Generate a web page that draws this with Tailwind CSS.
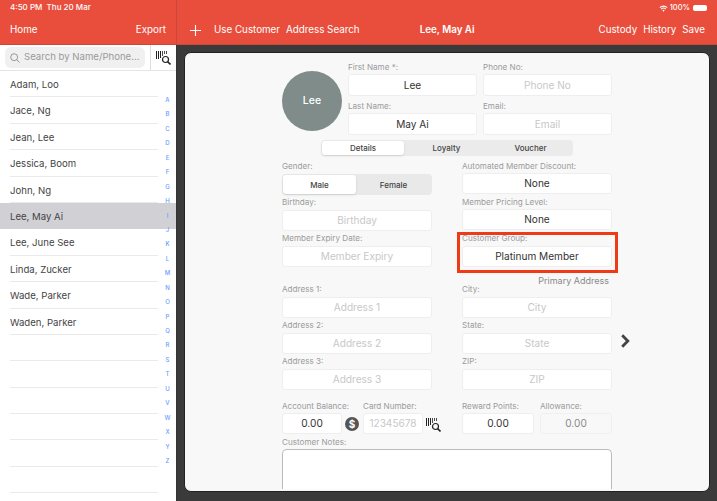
<!DOCTYPE html>
<html lang="en">
<head>
<meta charset="UTF-8">
<title>Customer</title>
<script src="https://cdn.jsdelivr.net/npm/@tailwindcss/browser@4"></script>
</head>
<body class="w-[717px] h-[501px] overflow-hidden bg-[#3a3a3a] font-['Inter','Liberation_Sans',sans-serif] text-[#333]">
<!-- Header -->
<div class="flex h-[45px] bg-[#e94e3d] text-white text-[9.8px] border-b border-[#c9483a]">
  <div class="w-[177px] shrink-0 border-r border-[#c9483a] px-[10px]">
    <div class="h-[14px] pt-[2px] text-[8px] font-medium leading-[10px]">4:50 PM&nbsp; Thu 20 Mar</div>
    <div class="flex justify-between pt-[9px] pr-[0px] leading-[14px]"><span>Home</span><span>Export</span></div>
  </div>
  <div class="flex-1">
    <div class="flex justify-end items-center h-[14px] pt-[2px] pr-[10px] text-[7.5px] font-medium leading-[10px]">
      <svg class="mr-[2px]" width="9" height="7" viewBox="0 0 10 8" fill="none" stroke="white" stroke-width="1.2"><path d="M.8 3a6 6 0 0 1 8.4 0M2.3 4.6a4 4 0 0 1 5.4 0"/><path d="M5 7.6 3.7 6.1a2 2 0 0 1 2.6 0z" fill="white" stroke="none"/></svg>
      <span>100%</span>
      <span class="ml-[3px] w-[14px] h-[6px] bg-white rounded-[2px]"></span>
    </div>
    <div class="flex items-center pt-[9px] leading-[14px]">
      <svg class="ml-[13px]" width="11" height="11" viewBox="0 0 11 11" stroke="white" stroke-width="1.1"><path d="M5.5 0v11M0 5.5h11"/></svg>
      <span class="ml-[13px]">Use Customer</span>
      <span class="ml-[6px]">Address Search</span>
      <span class="ml-[60px] font-semibold">Lee, May Ai</span>
      <span class="ml-auto">Custody</span>
      <span class="ml-[6px]">History</span>
      <span class="ml-[6px] mr-[12px]">Save</span>
    </div>
  </div>
</div>
<div class="flex h-[456px]">
  <!-- Sidebar -->
  <div class="w-[177px] shrink-0 bg-white border-r border-[#333] relative overflow-hidden">
    <div class="flex h-[26px] border-b border-[#e4e4e4]">
      <div class="ml-[5px] mt-[2px] w-[140px] h-[21px] bg-[#f0f0f0] rounded-[6px] flex items-center pl-[5px] gap-[4px] text-[9.6px] whitespace-nowrap text-[#9a9a9a]">
        <svg width="10" height="10" viewBox="0 0 11 11" fill="none" stroke="#8e8e8e" stroke-width="1"><circle cx="4.6" cy="4.6" r="3.8"/><path d="m7.5 7.5 3 3"/></svg>
        <span>Search by Name/Phone...</span>
      </div>
      <div class="ml-[5px] w-[26px] border-l border-[#ddd] flex items-center justify-center">
        <svg width="15" height="14" viewBox="0 0 15 14"><path d="M0 0h1v8H0zM2 0h1v8H2zM4 0h1v7H4zM6 0h.8v5H6zM8 0h.8v3H8zM10 0h.8v3h-.8z" fill="#222"/><circle cx="9.5" cy="8.5" r="3" fill="white" stroke="#222" stroke-width="1.2"/><path d="m11.7 10.7 2.8 2.8" stroke="#222" stroke-width="1.6"/></svg>
      </div>
    </div>
    <div class="pl-[10px] pr-[18px] text-[9.6px] text-[#444]">
      <div class="h-[26.4px] leading-[27px] border-b border-[#eaeaea]">Adam, Loo</div>
      <div class="h-[26.4px] leading-[27px] border-b border-[#eaeaea]">Jace, Ng</div>
      <div class="h-[26.4px] leading-[27px] border-b border-[#eaeaea]">Jean, Lee</div>
      <div class="h-[26.4px] leading-[27px] border-b border-[#eaeaea]">Jessica, Boom</div>
      <div class="h-[26.4px] leading-[27px] border-b border-[#eaeaea]">John, Ng</div>
      <div class="h-[26.4px] leading-[27px] -ml-[10px] -mr-[18px] pl-[10px] bg-[#d1d0d5]">Lee, May Ai</div>
      <div class="h-[26.4px] leading-[27px] border-b border-[#eaeaea]">Lee, June See</div>
      <div class="h-[26.4px] leading-[27px] border-b border-[#eaeaea]">Linda, Zucker</div>
      <div class="h-[26.4px] leading-[27px] border-b border-[#eaeaea]">Wade, Parker</div>
      <div class="h-[26.4px] leading-[27px] border-b border-[#eaeaea]">Waden, Parker</div>
      <div class="h-[26.4px] border-b border-[#eaeaea]"></div>
      <div class="h-[26.4px] border-b border-[#eaeaea]"></div>
      <div class="h-[26.4px] border-b border-[#eaeaea]"></div>
      <div class="h-[26.4px] border-b border-[#eaeaea]"></div>
      <div class="h-[26.4px] border-b border-[#eaeaea]"></div>
      <div class="h-[26.4px] border-b border-[#eaeaea]"></div>
    </div>
    <!-- A-Z index sits over the list -->
    <div class="absolute left-[160px] top-[48px] w-[15px] text-center text-[6px] font-medium leading-[14.44px] text-[#6a9cff]">
      <div>A</div><div>B</div><div>C</div><div>D</div><div>E</div><div>F</div><div>G</div><div>H</div><div>I</div><div>J</div><div>K</div><div>L</div><div>M</div><div>N</div><div>O</div><div>P</div><div>Q</div><div>R</div><div>S</div><div>T</div><div>U</div><div>V</div><div>W</div><div>X</div><div>Y</div><div>Z</div>
    </div>
  </div>
  <!-- Content -->
  <div class="flex-1 pt-[7px] pl-[7px]">
    <div class="w-[526px] h-[440px] bg-[#f8f8f8] border border-[#222] rounded-[7px] overflow-hidden pt-[9px] pl-[97px] text-[8.1px] text-[#9b9b9b]">
      <div class="flex">
        <div class="w-[60px] h-[60px] mt-[9px] rounded-full bg-[#7f8c8a] flex items-center justify-center text-white text-[10.5px] font-medium">Lee</div>
        <div class="ml-[6px] grid grid-cols-[129px_129px] gap-x-[6px]">
          <div class="h-[10px] leading-[10px]">First Name *:</div><div class="h-[10px] leading-[10px]">Phone No:</div>
          <div class="mt-[2px] h-[22px] pt-[1px] bg-white rounded-[3px] border border-[#eee] flex items-center justify-center text-[10.1px] text-[#333]">Lee</div>
          <div class="mt-[2px] h-[22px] pt-[1px] bg-white rounded-[3px] border border-[#eee] flex items-center justify-center text-[10.1px] text-[#c8c8c8]">Phone No</div>
          <div class="mt-[5px] h-[10px] leading-[10px]">Last Name:</div><div class="mt-[5px] h-[10px] leading-[10px]">Email:</div>
          <div class="mt-[2px] h-[22px] pt-[1px] bg-white rounded-[3px] border border-[#eee] flex items-center justify-center text-[10.1px] text-[#333]">May Ai</div>
          <div class="mt-[2px] h-[22px] pt-[1px] bg-white rounded-[3px] border border-[#eee] flex items-center justify-center text-[10.1px] text-[#c8c8c8]">Email</div>
        </div>
      </div>
      <!-- Tabs -->
      <div class="ml-[39px] mt-[5px] w-[252px] h-[16px] bg-[#ebebeb] rounded-[4px] flex text-[8px] font-medium text-[#444] p-[1px]">
        <div class="w-[82px] bg-white rounded-[3px] flex items-center justify-center shadow-sm">Details</div>
        <div class="w-[85px] flex items-center justify-center">Loyalty</div>
        <div class="w-[83px] flex items-center justify-center">Voucher</div>
      </div>
      <!-- Two columns -->
      <div class="flex mt-[5px]">
        <div class="w-[150px]">
          <div class="h-[10px] leading-[10px]">Gender:</div>
          <div class="mt-[3px] h-[21px] bg-[#e9e9e9] rounded-[4px] flex p-[1px] text-[8px] font-medium text-[#444]">
            <div class="w-[73px] bg-white rounded-[3px] flex items-center justify-center shadow-sm">Male</div>
            <div class="flex-1 flex items-center justify-center">Female</div>
          </div>
          <div class="mt-[2px] h-[10px] leading-[10px]">Birthday:</div>
          <div class="mt-[3px] h-[21px] bg-white rounded-[3px] border border-[#eee] flex items-center justify-center text-[10.1px] text-[#c8c8c8]">Birthday</div>
          <div class="mt-[2px] h-[10px] leading-[10px]">Member Expiry Date:</div>
          <div class="mt-[3px] h-[21px] bg-white rounded-[3px] border border-[#eee] flex items-center justify-center text-[10.1px] text-[#c8c8c8]">Member Expiry</div>
        </div>
        <div class="w-[150px] ml-[30px] relative">
          <div class="h-[10px] leading-[10px]">Automated Member Discount:</div>
          <div class="mt-[2px] h-[21px] pt-[1px] bg-white rounded-[3px] border border-[#eee] flex items-center justify-center text-[10.1px] text-[#333]">None</div>
          <div class="mt-[3px] h-[10px] leading-[10px]">Member Pricing Level:</div>
          <div class="mt-[2px] h-[21px] pt-[1px] bg-white rounded-[3px] border border-[#eee] flex items-center justify-center text-[10.1px] text-[#333]">None</div>
          <div class="mt-[3px] h-[10px] leading-[10px]">Customer Group:</div>
          <div class="mt-[3px] h-[21px] bg-white rounded-[3px] border border-[#eee] flex items-center justify-center text-[10.1px] text-[#333]">Platinum Member</div>
          <!-- highlight box over the field -->
          <div class="absolute left-[-5px] top-[71px] w-[161px] h-[41px] border-[3px] border-[#f03a17]"></div>
        </div>
      </div>
      <div class="w-[327px] h-[12px] mt-[8px] text-right text-[9px] leading-[12px] text-[#8a8a8a]">Primary Address</div>
      <div class="flex mt-[-3px]">
        <div class="w-[150px]">
          <div class="h-[10px] leading-[10px]">Address 1:</div>
          <div class="mt-[3px] h-[21px] bg-white rounded-[3px] border border-[#eee] flex items-center justify-center text-[10.1px] text-[#c8c8c8]">Address 1</div>
          <div class="mt-[2px] h-[10px] leading-[10px]">Address 2:</div>
          <div class="mt-[3px] h-[21px] bg-white rounded-[3px] border border-[#eee] flex items-center justify-center text-[10.1px] text-[#c8c8c8]">Address 2</div>
          <div class="mt-[2px] h-[10px] leading-[10px]">Address 3:</div>
          <div class="mt-[3px] h-[21px] bg-white rounded-[3px] border border-[#eee] flex items-center justify-center text-[10.1px] text-[#c8c8c8]">Address 3</div>
        </div>
        <div class="w-[150px] ml-[30px]">
          <div class="h-[10px] leading-[10px]">City:</div>
          <div class="mt-[3px] h-[21px] bg-white rounded-[3px] border border-[#eee] flex items-center justify-center text-[10.1px] text-[#c8c8c8]">City</div>
          <div class="mt-[2px] h-[10px] leading-[10px]">State:</div>
          <div class="mt-[3px] h-[21px] bg-white rounded-[3px] border border-[#eee] flex items-center justify-center text-[10.1px] text-[#c8c8c8]">State</div>
          <div class="mt-[2px] h-[10px] leading-[10px]">ZIP:</div>
          <div class="mt-[3px] h-[21px] bg-white rounded-[3px] border border-[#eee] flex items-center justify-center text-[10.1px] text-[#c8c8c8]">ZIP</div>
        </div>
        <svg class="ml-[9px] mt-[50px]" width="9" height="14" viewBox="0 0 9 14" fill="none" stroke="#444" stroke-width="2.8"><path d="m1.2 1.2 5.6 5.8-5.6 5.8"/></svg>
      </div>
      <!-- Balance row -->
      <div class="flex mt-[11px]">
        <div class="w-[60px]">
          <div class="h-[10px] leading-[10px] whitespace-nowrap">Account Balance:</div>
          <div class="mt-[2px] h-[21px] bg-white rounded-[3px] border border-[#eee] flex items-center justify-center text-[10.1px] text-[#333]">0.00</div>
        </div>
        <div class="w-[14px] h-[14px] ml-[3px] mt-[16px] rounded-full bg-[#555] flex items-center justify-center text-white text-[10px] font-bold">$</div>
        <div class="w-[60px] ml-[4px]">
          <div class="h-[10px] leading-[10px]">Card Number:</div>
          <div class="mt-[2px] h-[21px] bg-white rounded-[3px] border border-[#eee] flex items-center justify-center text-[10.1px] text-[#c8c8c8]">12345678</div>
        </div>
        <svg class="ml-[3px] mt-[17px]" width="15" height="14" viewBox="0 0 15 14"><path d="M0 0h1v8H0zM2 0h1v8H2zM4 0h1v7H4zM6 0h.8v5H6zM8 0h.8v3H8zM10 0h.8v3h-.8z" fill="#222"/><circle cx="9.5" cy="8.5" r="3" fill="#f8f8f8" stroke="#222" stroke-width="1.2"/><path d="m11.7 10.7 2.8 2.8" stroke="#222" stroke-width="1.6"/></svg>
        <div class="w-[72px] ml-[21px]">
          <div class="h-[10px] leading-[10px]">Reward Points:</div>
          <div class="mt-[2px] h-[21px] bg-white rounded-[3px] border border-[#eee] flex items-center justify-center text-[10.1px] text-[#333]">0.00</div>
        </div>
        <div class="w-[72px] ml-[6px]">
          <div class="h-[10px] leading-[10px]">Allowance:</div>
          <div class="mt-[2px] h-[21px] bg-[#f8f8f8] rounded-[3px] border border-[#f0f0f0] flex items-center justify-center text-[10.1px] text-[#8a8a8a]">0.00</div>
        </div>
      </div>
      <div class="mt-[3px] h-[10px] leading-[10px]">Customer Notes:</div>
      <div class="mt-[2px] w-[330px] h-[40px] bg-white rounded-t-[5px] border border-b-0 border-[#bbb]"></div>
    </div>
  </div>
</div>
</body>
</html>
